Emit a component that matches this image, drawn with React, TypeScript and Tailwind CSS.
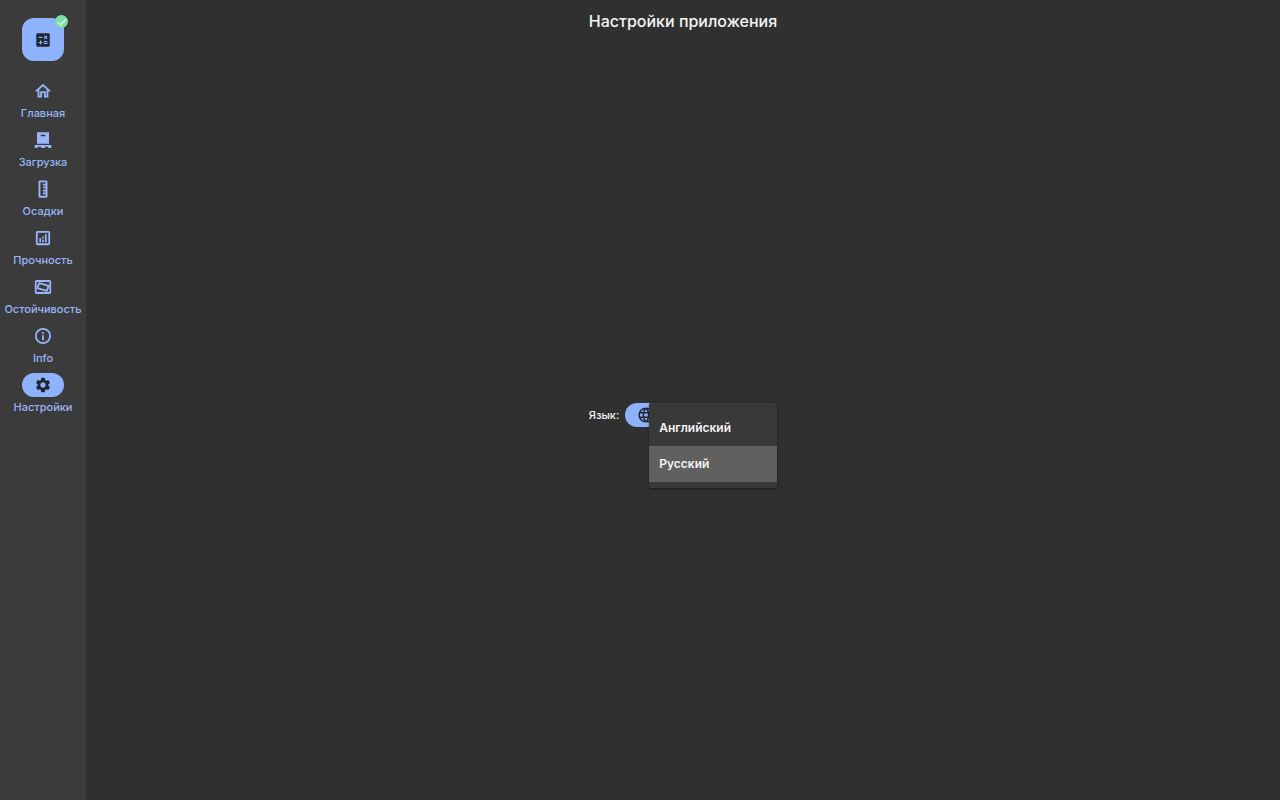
import { useState, type ReactNode } from 'react';
import { MdCalculate, MdSettings, MdLanguage, MdCheck } from 'react-icons/md';

function HomeIcon() {
  return (
    <svg viewBox="0 0 24 24" className="size-4.5" fill="none" stroke="currentColor" aria-hidden="true">
      <path d="M2.500 12.500 12 4l9.500 8.500" strokeWidth="2.400" />
      <path d="M6 10v9.500h3.500v-6h5v6H18V10" strokeWidth="2.400" />
    </svg>
  );
}

function PalletIcon() {
  return (
    <svg viewBox="0 0 24 24" className="size-4.5" fill="currentColor" aria-hidden="true">
      <path fillRule="evenodd" d="M4 1.500h16V17H4zM9 5v2h6V5z" />
      <path d="M1 18.500h22v4h-4V21h-4.500v1.500h-5V21H5v1.500H1z" />
    </svg>
  );
}

function RulerIcon() {
  return (
    <svg viewBox="0 0 24 24" className="size-4.5" fill="currentColor" aria-hidden="true">
      <path
        fillRule="evenodd"
        d="M8 .5h8a2 2 0 0 1 2 2v19a2 2 0 0 1-2 2H8a2 2 0 0 1-2-2v-19a2 2 0 0 1 2-2zM8.500 3v18h7v-2H12v-2.200h3.500v-1.600H12V13h3.500v-2H12V8.800h3.500V7.200H12V5h3.500V3z"
      />
    </svg>
  );
}

function StrengthIcon() {
  return (
    <svg viewBox="0 0 24 24" className="size-4.5" fill="none" stroke="currentColor" aria-hidden="true">
      <rect x="3.700" y="3.700" width="16.600" height="16.600" rx="1" strokeWidth="2.400" />
      <path d="M8.200 12v5.500M12 14v3.500M12 10v2.500M15.800 7v10.500" strokeWidth="2.200" />
    </svg>
  );
}

function StabilityIcon() {
  return (
    <svg viewBox="0 0 24 24" className="size-4.5" fill="none" stroke="currentColor" aria-hidden="true">
      <rect x="2.300" y="4" width="19.400" height="16" rx="1" strokeWidth="2.400" />
      <path d="M7 6.800 19.500 10.500 17 17.200 4.500 13.500z" strokeWidth="2.400" strokeLinejoin="round" />
    </svg>
  );
}

function InfoIcon() {
  return (
    <svg viewBox="0 0 24 24" className="size-4.5" fill="none" stroke="currentColor" aria-hidden="true">
      <circle cx="12" cy="12" r="9.500" strokeWidth="2.400" />
      <path d="M12 6.500V9M12 11v6.500" strokeWidth="2.400" />
    </svg>
  );
}

type NavEntry = { label: string; icon: ReactNode };

const entries: NavEntry[] = [
  { label: 'Главная', icon: <HomeIcon /> },
  { label: 'Загрузка', icon: <PalletIcon /> },
  { label: 'Осадки', icon: <RulerIcon /> },
  { label: 'Прочность', icon: <StrengthIcon /> },
  { label: 'Остойчивость', icon: <StabilityIcon /> },
  { label: 'Info', icon: <InfoIcon /> },
  { label: 'Настройки', icon: <MdSettings className="size-4.5" /> },
];

const languages = ['Английский', 'Русский'];

function Sidebar() {
  const [current, setCurrent] = useState('Настройки');
  return (
    <aside className="flex w-[86px] shrink-0 flex-col items-center gap-[18px] bg-[#3b3b3b] pt-[18px] text-[#9ab6f8]">
      <button
        type="button"
        aria-label="Рассчитать"
        className="relative flex h-[43px] w-[42px] items-center justify-center rounded-xl bg-[#8fb2fd] text-[#1e2630]"
      >
        <MdCalculate className="size-[18px]" />
        <span className="absolute -top-[3px] -right-1 flex size-[13px] items-center justify-center rounded-full bg-[#7fe0a6] text-white">
          <MdCheck className="size-3" />
        </span>
      </button>
      <nav className="flex w-full flex-col gap-[7px]">
        {entries.map(({ label, icon }) => (
          <a
            key={label}
            href="#"
            aria-current={current === label ? 'page' : undefined}
            onClick={() => setCurrent(label)}
            className="flex flex-col items-center gap-0.5"
          >
            <span
              className={
                current === label
                  ? 'flex h-6 w-[42px] items-center justify-center rounded-full bg-[#8fb2fd] text-[#1e2630]'
                  : 'flex h-6 w-[42px] items-center justify-center'
              }
            >
              {icon}
            </span>
            <span className="text-[11px] leading-4 font-medium">{label}</span>
          </a>
        ))}
      </nav>
    </aside>
  );
}

function LanguagePicker() {
  const [open, setOpen] = useState(true);
  const [language, setLanguage] = useState('Русский');
  return (
    <div className="flex items-center gap-1.5">
      <span id="language-label" className="text-[11px] leading-4 font-medium">
        Язык:
      </span>
      <div className="relative">
        <button
          type="button"
          aria-labelledby="language-label"
          aria-haspopup="listbox"
          aria-expanded={open}
          onClick={() => setOpen(!open)}
          className="flex h-6 w-[152px] items-center gap-2 rounded-full bg-[#8fb2fd] px-3 text-xs font-semibold text-[#1e2630]"
        >
          <MdLanguage className="size-4.5" />
          {!open && language}
        </button>
        {open && (
          <div
            role="listbox"
            aria-labelledby="language-label"
            className="absolute top-0 right-0 flex w-32 flex-col rounded-xs bg-[#393939] pt-[7px] pb-1.5 shadow-sm shadow-black/40"
          >
            {languages.map((name) => (
              <button
                key={name}
                type="button"
                role="option"
                aria-selected={language === name}
                onClick={() => {
                  setLanguage(name);
                  setOpen(false);
                }}
                className={
                  language === name
                    ? 'h-9 bg-[#606060] px-2.5 text-left text-xs font-semibold'
                    : 'h-9 px-2.5 text-left text-xs font-semibold'
                }
              >
                {name}
              </button>
            ))}
          </div>
        )}
      </div>
    </div>
  );
}

export default function App() {
  return (
    <div className="flex min-h-screen bg-[#303030] font-['Inter','Noto_Sans',sans-serif] text-[#f5f5f5]">
      <Sidebar />
      <main className="flex flex-1 flex-col">
        <h1 className="pt-3 text-center text-base leading-[18px] font-medium">Настройки приложения</h1>
        <div className="flex flex-1 items-center justify-center">
          <LanguagePicker />
        </div>
      </main>
    </div>
  );
}
